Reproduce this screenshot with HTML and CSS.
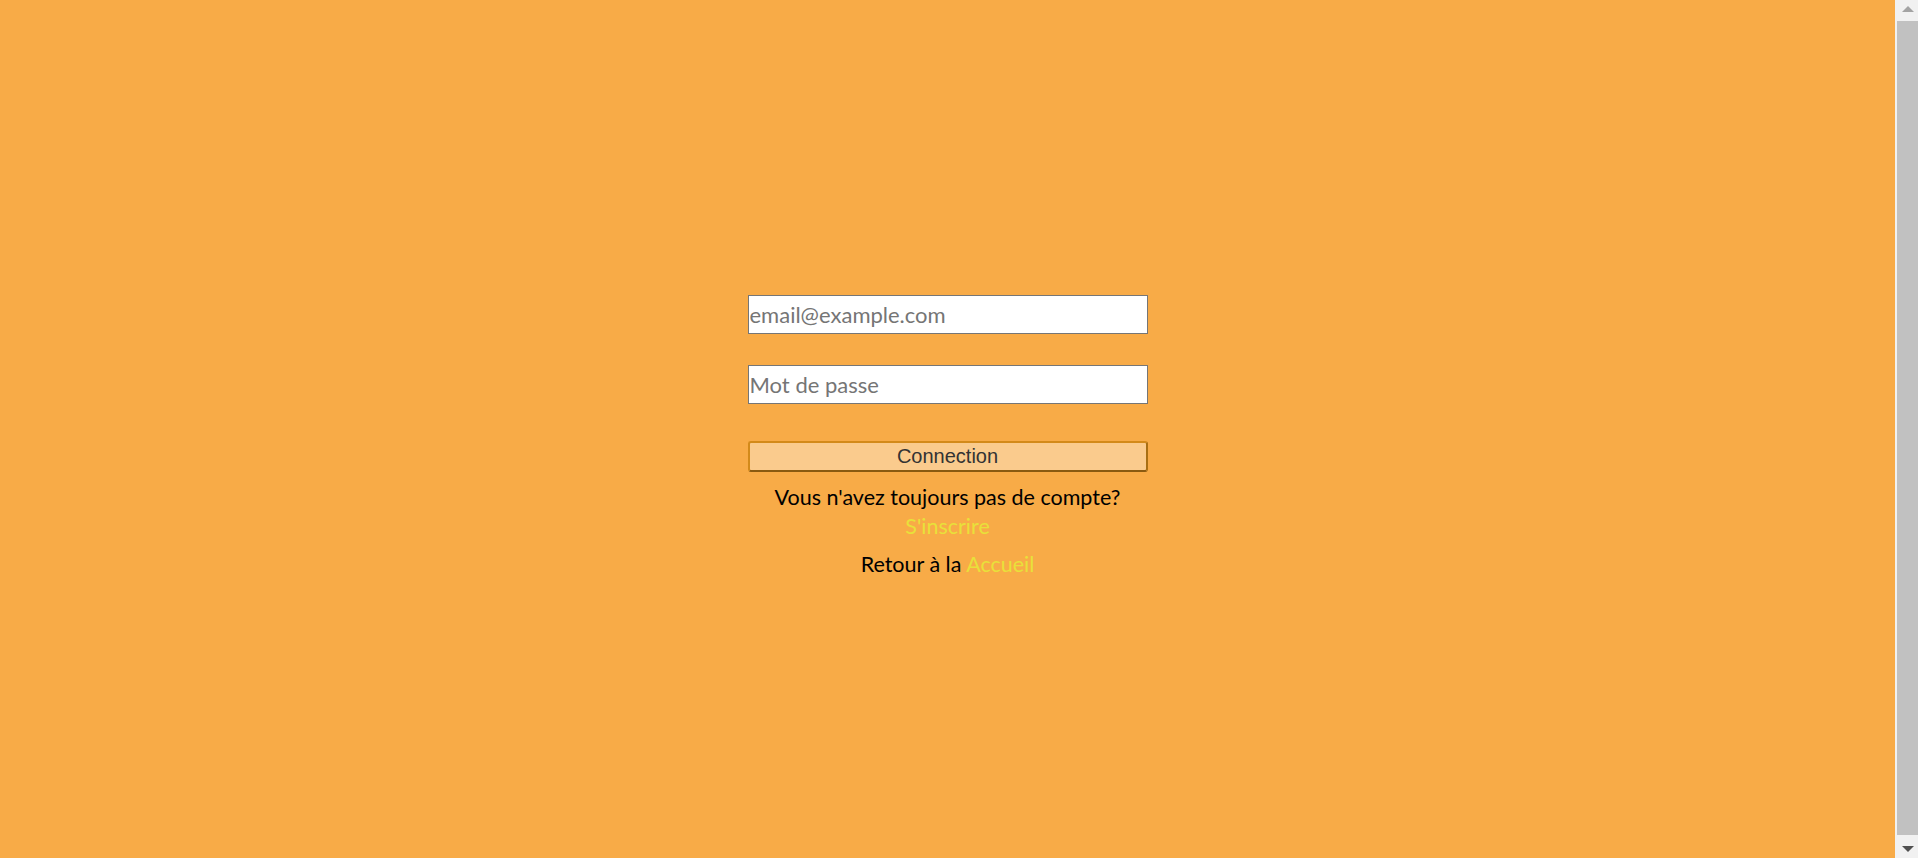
FILE: index.html
```html
<!DOCTYPE html>
<html lang="fr">
<head>
<meta charset="utf-8">
<title>Connexion</title>
<link rel="stylesheet" href="styles.css">
</head>
<body>
<main class="page">
  <form class="login">
    <input class="field" type="email" placeholder="email@example.com">
    <input class="field field-pass" type="password" placeholder="Mot de passe">
    <button class="btn" type="button">Connection</button>
    <p class="note">Vous n'avez toujours pas de compte?<br><a class="link" href="#">S'inscrire</a></p>
    <p class="note back">Retour à la <a class="link" href="#">Accueil</a></p>
  </form>
</main>
<div class="scrollbar" aria-hidden="true">
  <span class="arrow arrow-up"></span>
  <span class="thumb"></span>
  <span class="arrow arrow-down"></span>
</div>
</body>
</html>
```

FILE: styles.css
```css
html {
  background: #f8ab47;
  overflow: hidden;
}
body {
  margin: 8px 31px 8px 8px;
  background: #f8ab47;
  font-family: Lato, "Noto Sans", sans-serif;
}
.page {
  height: 100vh;
  display: flex;
  align-items: center;
  justify-content: center;
}
.login {
  width: 400px;
  display: flex;
  flex-direction: column;
  align-items: stretch;
}
.field {
  box-sizing: border-box;
  height: 39px;
  margin: 0;
  padding: 1px 1px;
  border: 1px solid #767676;
  border-radius: 0;
  background: #fff;
  font-family: Lato, "Noto Sans", sans-serif;
  font-size: 22px;
  color: #333;
}
.field::placeholder {
  color: #757575;
}
.field-pass {
  margin-top: 31px;
}
.btn {
  box-sizing: border-box;
  margin-top: 37px;
  height: 31px;
  padding: 0;
  border: 2px solid #d38a1a;
  border-bottom-color: #8a5a10;
  border-right-color: #a86f14;
  border-radius: 3px;
  background: #facb8d;
  font-family: "Liberation Sans", Arial, sans-serif;
  font-size: 20px;
  color: #333;
}
.note {
  margin: 11px 0 0;
  text-align: center;
  font-size: 21.5px;
  line-height: 29px;
  color: #000;
}
.back {
  margin-top: 9px;
}
.link {
  color: #e8e03a;
  text-decoration: none;
}
.scrollbar {
  position: fixed;
  top: 0;
  right: 0;
  width: 23px;
  height: 100%;
  background: #f1f1f1;
}
.thumb {
  position: absolute;
  top: 21px;
  bottom: 23px;
  left: 2px;
  right: 0;
  background: #c1c1c1;
}
.arrow {
  position: absolute;
  left: 7px;
  width: 0;
  height: 0;
  border-left: 6px solid transparent;
  border-right: 6px solid transparent;
}
.arrow-up {
  top: 6px;
  border-bottom: 6px solid #a3a3a3;
}
.arrow-down {
  bottom: 6px;
  border-top: 6px solid #505050;
}
```
